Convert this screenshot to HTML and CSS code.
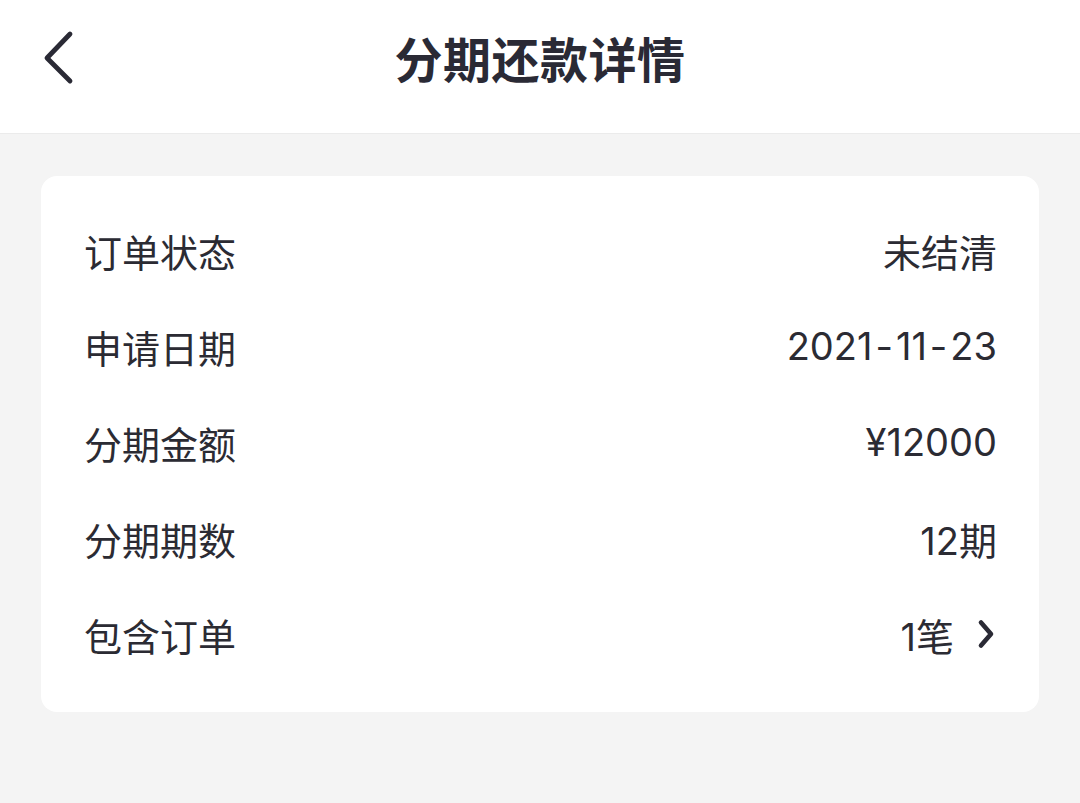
FILE: index.html
```html
<!DOCTYPE html>
<html lang="zh-CN">
<head>
    <meta charset="UTF-8">
    <meta name="viewport" content="width=device-width, initial-scale=1.0">
    <title>分期还款详情</title>
    <link rel="stylesheet" href="styles.css">
</head>
<body>
    <header class="topbar">
        <a class="back" href="#">
            <svg width="40" height="56" viewBox="0 0 40 56">
                <path d="M32 4 L9 28 L32 51" fill="none" stroke="#2a2a35" stroke-width="4.8" stroke-linecap="round" stroke-linejoin="round"/>
            </svg>
        </a>
        <h1>分期还款详情</h1>
    </header>
    <main class="page">
        <section class="card">
            <div class="row">
                <span class="label">订单状态</span>
                <span class="value">未结清</span>
            </div>
            <div class="row">
                <span class="label">申请日期</span>
                <span class="value">2021<span class="dash">-</span>11<span class="dash">-</span>23</span>
            </div>
            <div class="row">
                <span class="label">分期金额</span>
                <span class="value">¥12000</span>
            </div>
            <div class="row">
                <span class="label">分期期数</span>
                <span class="value">12期</span>
            </div>
            <div class="row">
                <span class="label">包含订单</span>
                <span class="value link">1笔
                    <svg class="arrow" width="20" height="30" viewBox="0 0 20 30">
                        <path d="M5 3.5 L15 15 L5 26.5" fill="none" stroke="#2a2a35" stroke-width="4.6" stroke-linecap="round" stroke-linejoin="round"/>
                    </svg>
                </span>
            </div>
        </section>
    </main>
</body>
</html>
```

FILE: styles.css
```css
html, body {
    margin: 0;
    padding: 0;
    height: 100%;
}
body {
    font-family: "Inter", "Noto Sans CJK SC", sans-serif;
    background: #f4f4f4;
    color: #2b2b33;
}
.topbar {
    position: relative;
    height: 133px;
    background: #fff;
    border-bottom: 1px solid #ebebeb;
    display: flex;
    align-items: center;
    justify-content: center;
}
.topbar h1 {
    margin: 0;
    font-family: "Noto Sans CJK SC", sans-serif;
    font-size: 48px;
    font-weight: 700;
    color: #2a2a35;
    margin-top: -20px;
    letter-spacing: 0.5px;
}
.back {
    position: absolute;
    left: 38px;
    top: 30px;
    display: block;
    line-height: 0;
}
.page {
    padding: 42px 41px;
}
.card {
    background: #fff;
    border-radius: 16px;
    padding: 26px 42px 30px 43px;
}
.row {
    height: 96px;
    display: flex;
    align-items: center;
    justify-content: space-between;
    font-size: 38px;
}
.value {
    display: flex;
    align-items: center;
}
.dash {
    padding: 0 3px;
}
.link .arrow {
    margin-left: 22px;
    margin-right: 1px;
}
```
